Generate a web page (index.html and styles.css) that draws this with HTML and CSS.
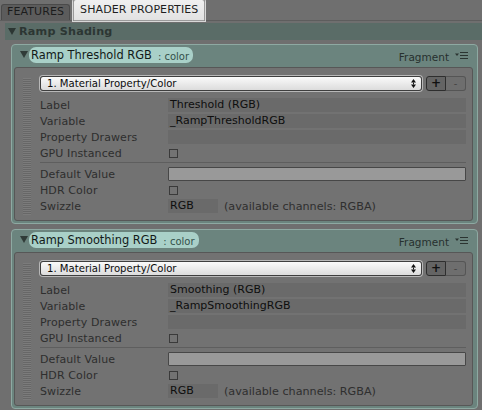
FILE: index.html
```html
<!DOCTYPE html>
<html>
<head>
<meta charset="utf-8">
<link rel="stylesheet" href="styles.css">
</head>
<body>
<div class="tabs">
  <div class="tab">FEATURES</div>
  <div class="tab tab-active">SHADER PROPERTIES</div>
</div>
<div class="section">
  <span class="tri tri-section"></span>
  <span class="section-title">Ramp Shading</span>
</div>

<div class="block">
  <div class="block-head">
    <span class="tri"></span>
    <span class="pill"><span class="pill-name">Ramp Threshold RGB</span><span class="pill-type">: color</span></span>
    <span class="spacer"></span>
    <span class="frag">Fragment</span>
    <svg class="menu" width="13" height="7" viewBox="0 0 13 7"><path d="M0 1.5h4l-2 2.5z" fill="#2b3431"/><path d="M5 0.5h8M5 3.5h8M5 6.5h8" stroke="#2b3431" stroke-width="1"/></svg>
  </div>
  <div class="inner">
    <div class="grip"></div>
    <div class="content">
      <div class="toolbar">
        <div class="dropdown"><span>1. Material Property/Color</span>
          <svg class="updown" width="5" height="9" viewBox="0 0 5 9"><path d="M2.5 0L5 3.5H0z M2.5 9L0 5.5h5z" fill="#111"/><path d="M2.5 3.5v2" stroke="#111"/></svg>
        </div>
        <div class="btns"><span class="btn btn-plus">+</span><span class="btn btn-minus">-</span></div>
      </div>
      <div class="row"><span class="lbl">Label</span><span class="field">Threshold (RGB)</span></div>
      <div class="row"><span class="lbl">Variable</span><span class="field">_RampThresholdRGB</span></div>
      <div class="row"><span class="lbl">Property Drawers</span><span class="field"></span></div>
      <div class="row"><span class="lbl">GPU Instanced</span><span class="check"></span></div>
      <div class="sep"></div>
      <div class="row"><span class="lbl">Default Value</span><span class="colorfield"></span></div>
      <div class="row"><span class="lbl">HDR Color</span><span class="check"></span></div>
      <div class="row"><span class="lbl">Swizzle</span><span class="field field-short">RGB</span><span class="hint">(available channels: RGBA)</span></div>
    </div>
  </div>
</div>

<div class="block">
  <div class="block-head">
    <span class="tri"></span>
    <span class="pill"><span class="pill-name">Ramp Smoothing RGB</span><span class="pill-type">: color</span></span>
    <span class="spacer"></span>
    <span class="frag">Fragment</span>
    <svg class="menu" width="13" height="7" viewBox="0 0 13 7"><path d="M0 1.5h4l-2 2.5z" fill="#2b3431"/><path d="M5 0.5h8M5 3.5h8M5 6.5h8" stroke="#2b3431" stroke-width="1"/></svg>
  </div>
  <div class="inner">
    <div class="grip"></div>
    <div class="content">
      <div class="toolbar">
        <div class="dropdown"><span>1. Material Property/Color</span>
          <svg class="updown" width="5" height="9" viewBox="0 0 5 9"><path d="M2.5 0L5 3.5H0z M2.5 9L0 5.5h5z" fill="#111"/><path d="M2.5 3.5v2" stroke="#111"/></svg>
        </div>
        <div class="btns"><span class="btn btn-plus">+</span><span class="btn btn-minus">-</span></div>
      </div>
      <div class="row"><span class="lbl">Label</span><span class="field">Smoothing (RGB)</span></div>
      <div class="row"><span class="lbl">Variable</span><span class="field">_RampSmoothingRGB</span></div>
      <div class="row"><span class="lbl">Property Drawers</span><span class="field"></span></div>
      <div class="row"><span class="lbl">GPU Instanced</span><span class="check"></span></div>
      <div class="sep"></div>
      <div class="row"><span class="lbl">Default Value</span><span class="colorfield"></span></div>
      <div class="row"><span class="lbl">HDR Color</span><span class="check"></span></div>
      <div class="row"><span class="lbl">Swizzle</span><span class="field field-short">RGB</span><span class="hint">(available channels: RGBA)</span></div>
    </div>
  </div>
</div>
</body>
</html>
```
FILE: styles.css
```css
html, body {
  margin: 0;
  padding: 0;
}
body {
  width: 482px;
  height: 410px;
  overflow: hidden;
  background: #6f6f6f;
  font-family: "DejaVu Sans", sans-serif;
  font-size: 11px;
  color: #222;
}
.tabs {
  height: 20px;
  display: flex;
  align-items: flex-end;
  padding-left: 1px;
  gap: 3px;
  border-bottom: 1px solid #5d5d5d;
  box-sizing: border-box;
  height: 21px;
}
.tab {
  height: 16px;
  box-sizing: border-box;
  padding: 0 5px;
  line-height: 14px;
  background: #5c5c5c;
  border: 1px solid #4a4a4a;
  border-bottom: none;
  border-radius: 3px 3px 0 0;
  color: #1c1c1c;
  letter-spacing: 0.1px;
}
.tab-active {
  height: 22px;
  margin-bottom: -1px;
  line-height: 20px;
  padding: 0 6px;
  background: linear-gradient(#f0f0f0, #e2e2e2);
  border: 1px solid #9a9a9a;
  box-shadow: 0 0 0 1px #d8d8d8;
  border-radius: 3px 3px 0 0;
  color: #1e1e1e;
}
.section {
  margin: 2px 0 0 5px;
  height: 17px;
  background: #5a6c67;
  display: flex;
  align-items: center;
}
.tri {
  width: 0;
  height: 0;
  border-left: 4px solid transparent;
  border-right: 4px solid transparent;
  border-top: 7px solid #2e3a37;
  flex: none;
}
.tri-section {
  margin-left: 3px;
  border-top-color: #2c3633;
}
.section-title {
  margin-left: 3px;
  font-weight: bold;
  font-size: 11.2px;
  color: #2c3633;
  letter-spacing: 0.2px;
}
.block {
  margin: 4px 4px 0 11px;
  border: 1px solid #8ea9a2;
  border-radius: 4px;
  background: #6b847e;
  padding: 0 4px 2px 2px;
}
.block + .block {
  margin-top: 5px;
}
.block-head {
  height: 22px;
  display: flex;
  align-items: flex-start;
  padding: 0 5px 0 6px;
}
.block-head .tri {
  margin-top: 6px;
  border-top-color: #303b38;
}
.pill {
  margin: 2px 0 0 1px;
  height: 16px;
  background: #a9d0c8;
  border-radius: 7px;
  padding: 0 4px 0 2px;
  display: flex;
  align-items: center;
  white-space: nowrap;
}
.pill-name {
  font-size: 11.4px;
  color: #121a18;
}
.pill-type {
  margin-left: 6px;
  font-size: 10px;
  color: #34504a;
  padding-top: 2px;
}
.spacer {
  flex: 1;
}
.frag {
  margin-top: 6px;
  font-size: 10.5px;
  color: #27302e;
}
.menu {
  margin: 7px 0 0 6px;
}
.inner {
  display: flex;
  background: #727272;
  border: 1px solid #575757;
  border-radius: 3px;
  padding: 8px 6px 5px 8px;
}
.grip {
  width: 8px;
  margin: 2px 9px 0 0;
  flex: none;
  background: repeating-linear-gradient(#7b7b7b 0 1px, #676767 1px 2px);
  margin-bottom: 0;
}
.content {
  flex: 1;
  min-width: 0;
}
.toolbar {
  display: flex;
  height: 15px;
  margin-bottom: 7px;
}
.dropdown {
  flex: 1;
  box-sizing: border-box;
  height: 15px;
  background: linear-gradient(#fafafa, #dcdcdc);
  border: 1px solid #3e3e3e;
  border-radius: 3px;
  box-shadow: 0 0 0 1px #b8b8b8;
  display: flex;
  align-items: center;
  padding: 0 5px 0 6px;
  font-size: 10.1px;
  color: #0c0c0c;
}
.dropdown span {
  flex: 1;
}
.btns {
  margin-left: 4px;
  display: flex;
  height: 15px;
}
.btn {
  width: 20px;
  box-sizing: border-box;
  height: 15px;
  line-height: 13px;
  text-align: center;
  background: #6c6c6c;
  border: 1px solid #444;
}
.btn-plus {
  border-radius: 3px 0 0 3px;
  background: #646464;
  font-weight: bold;
  color: #111;
  font-size: 12px;
  border-color: #2e2e2e;
}
.btn-minus {
  border-radius: 0 3px 3px 0;
  border-left: none;
  color: #454545;
  font-size: 10px;
  background: #6e6e6e;
  border-color: #555;
}
.row {
  display: flex;
  align-items: center;
  height: 14px;
  margin-bottom: 2px;
}
.lbl {
  width: 128px;
  flex: none;
  color: #2e2e2e;
  font-size: 11px;
  letter-spacing: 0.1px;
}
.field {
  flex: 1;
  height: 14px;
  line-height: 14px;
  background: #6a6a6a;
  padding-left: 2px;
  color: #0e0e0e;
  font-size: 11px;
  white-space: nowrap;
}
.field-short {
  flex: none;
  width: 48px;
}
.hint {
  margin-left: 6px;
  color: #2f2f2f;
  font-size: 11.2px;
}
.check {
  width: 9px;
  height: 9px;
  box-sizing: border-box;
  border: 1px solid #3a3a3a;
  margin-left: 1px;
  background: #737373;
}
.sep {
  height: 1px;
  background: #5e5e5e;
  margin-bottom: 4px;
}
.colorfield {
  flex: 1;
  height: 14px;
  box-sizing: border-box;
  border: 1px solid #474747;
  background: #999;
  border-radius: 1px;
}
```
